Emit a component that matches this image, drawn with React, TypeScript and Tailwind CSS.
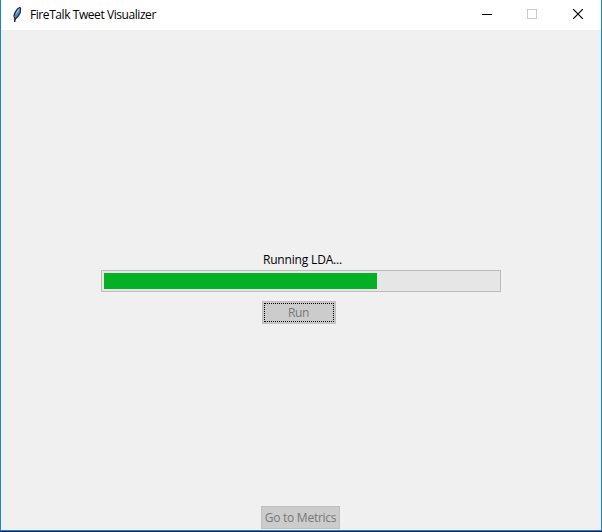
import React from 'react';

function FeatherIcon() {
  return (
    <svg width="16" height="16" viewBox="0 0 16 16" className="ml-[9px] shrink-0" aria-hidden="true">
      <path d="M9.4 0 7 1.6 4.6 5 3.3 8.8 4.1 11.8 4 15H5.3L5.8 12.4 8.7 9.6 10.7 5.9 11.2 1.5 10.5 0Z" fill="#24272c" />
      <path d="M9.6 1 7.6 2.6 5.5 6 4.4 9.4 5.2 11.2 7.6 8.9 9.6 5.4 10.2 1.6Z" fill="#4c86d0" />
      <path d="M9.2 1.4 7.1 3.9 5.4 8 6.8 6.5 8.8 3.5Z" fill="#a9c7ec" />
    </svg>
  );
}

function TitleBar() {
  return (
    <header className="flex h-[30px] items-center bg-white">
      <FeatherIcon />
      <h1 className="ml-1 whitespace-nowrap text-[12px] leading-[30px] tracking-[-0.43px] text-black">
        FireTalk Tweet Visualizer
      </h1>
      <div className="ml-auto flex h-full shrink-0">
        <button aria-label="Minimize" className="flex h-full w-[46px] items-center justify-center">
          <svg width="10" height="10" shapeRendering="crispEdges">
            <path d="M0 4h10v1H0z" fill="#000" />
          </svg>
        </button>
        <button aria-label="Maximize" disabled className="flex h-full w-[45px] items-center justify-center">
          <span className="mb-[2px] mr-px size-[10px] border border-[#cccccc]" />
        </button>
        <button aria-label="Close" className="flex h-full w-[46px] items-center justify-center">
          <svg width="10" height="10" viewBox="0 0 10 10" className="mb-[2px]">
            <path d="M0 0 10 10M10 0 0 10" stroke="#000" strokeWidth="1.2" />
          </svg>
        </button>
      </div>
    </header>
  );
}

export default function App() {
  return (
    <div className="flex h-[532px] w-[602px] flex-col overflow-hidden bg-[#0d2136] font-['Open_Sans','Noto_Sans',sans-serif]">
      <div className="flex h-[531px] flex-col border-x border-b border-[#1883d7]">
        <TitleBar />
        <main className="flex flex-1 flex-col items-center bg-[#f0f0f0] pt-[220px]">
          <p className="ml-[3px] h-5 whitespace-nowrap text-[12px] leading-[20px] tracking-[-0.17px] text-black">
            Running LDA...
          </p>
          <div role="progressbar" className="flex h-[22px] w-[400px] border border-[#bcbcbc] bg-[#e6e6e6] p-[2px]">
            <div className="h-4 w-[273px] bg-[#06b025]" />
          </div>
          <button disabled className="mr-1 mt-[9px] flex h-[23px] w-[74px] border border-[#bfbfbf] bg-[#cccccc] p-px">
            <span className="flex h-[19px] w-[70px] items-center justify-center border border-dotted border-black pr-px text-[12px] leading-[17px] tracking-[-0.3px] text-[#777777]">
              Run
            </span>
          </button>
          <button disabled className="mb-px mr-px mt-auto flex h-[23px] w-[79px] items-center justify-center whitespace-nowrap border border-[#bfbfbf] bg-[#cccccc] text-[12px] leading-[21px] tracking-[-0.25px] text-[#777777]">
            Go to Metrics
          </button>
        </main>
      </div>
    </div>
  );
}
